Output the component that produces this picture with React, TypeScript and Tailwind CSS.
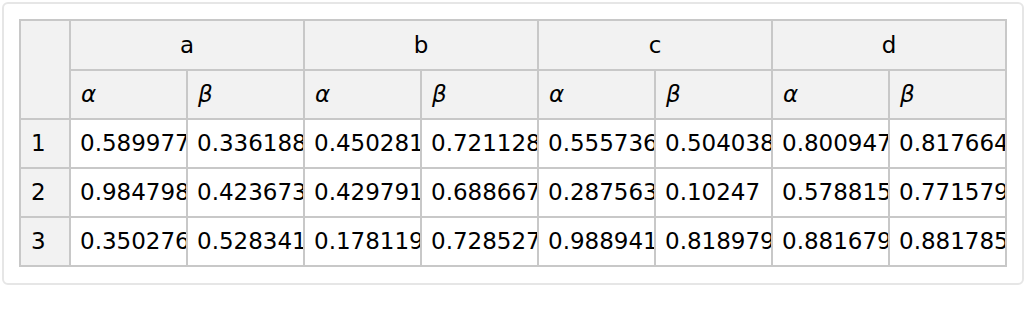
const groups = ["a", "b", "c", "d"];

const rows = [
  ["0.589977", "0.336188", "0.450281", "0.721128", "0.555736", "0.504038", "0.800947", "0.817664"],
  ["0.984798", "0.423673", "0.429791", "0.688667", "0.287563", "0.10247", "0.578815", "0.771579"],
  ["0.350276", "0.528341", "0.178119", "0.728527", "0.988941", "0.818979", "0.881679", "0.881785"],
];

const cell = "border-r-2 border-b-2 border-[#c8c8c8] p-0";

const App = () => {
  return (
    <div className="m-[2px] w-[1022px] rounded-[6px] border-2 border-[#e6e6e6] bg-white pt-[15px] pb-[16px] px-[15px] text-[23px] leading-none text-black [font-family:'DejaVu_Sans',Verdana,sans-serif]">
      <table className="table-fixed border-separate border-spacing-0 border-l-2 border-t-2 border-[#c8c8c8]">
        <colgroup>
          <col className="w-[50px]" />
          {groups.flatMap((g) => [
            <col key={g + "1"} className="w-[117px]" />,
            <col key={g + "2"} className="w-[117px]" />,
          ])}
        </colgroup>
        <thead>
          <tr className="h-[50px] bg-[#f2f2f2]">
            <th rowSpan={2} className={cell}></th>
            {groups.map((g) => (
              <th key={g} colSpan={2} className={`${cell} text-center font-normal`}>
                {g}
              </th>
            ))}
          </tr>
          <tr className="h-[49px] bg-[#f2f2f2]">
            {groups.flatMap((g) => [
              <th key={g + "a"} className={`${cell} pl-[10px] text-left font-normal italic`}>
                α
              </th>,
              <th key={g + "b"} className={`${cell} pl-[10px] text-left font-normal italic`}>
                β
              </th>,
            ])}
          </tr>
        </thead>
        <tbody>
          {rows.map((r, i) => (
            <tr key={i} className="h-[49px]">
              <td className={`${cell} bg-[#f2f2f2] pl-[10px]`}>{i + 1}</td>
              {r.map((v, j) => (
                <td key={j} className={`${cell} bg-white`}>
                  <div className="w-[115px] overflow-hidden whitespace-nowrap pl-[9px]">
                    {v}
                  </div>
                </td>
              ))}
            </tr>
          ))}
        </tbody>
      </table>
    </div>
  );
};

export default App;
